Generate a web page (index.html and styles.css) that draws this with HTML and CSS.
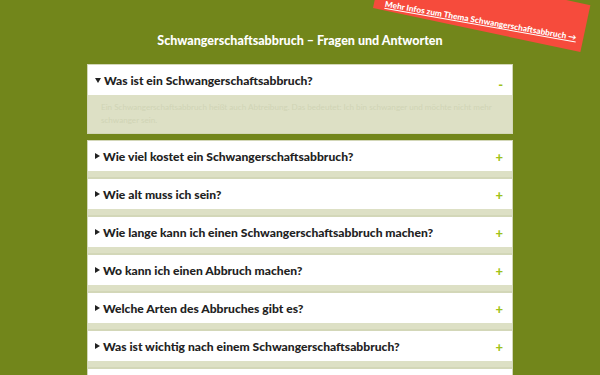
FILE: index.html
```html
<!DOCTYPE html>
<html lang="de">
<head>
  <meta charset="utf-8" />
  <title>Schwangerschaftsabbruch – Fragen und Antworten</title>
  <link rel="stylesheet" href="styles.css">
</head>
<body>

<a class="ribbon" href="#"><span>Mehr Infos zum Thema Schwangerschaftsabbruch →</span></a>

<h1>Schwangerschaftsabbruch – Fragen und Antworten</h1>

<div class="faq">
  <details open>
    <summary>Was ist ein Schwangerschaftsabbruch?</summary>
    <p>Ein Schwangerschaftsabbruch heißt auch Abtreibung. Das bedeutet: Ich bin schwanger und möchte nicht mehr schwanger sein.</p>
  </details>
  <details>
    <summary>Wie viel kostet ein Schwangerschaftsabbruch?</summary>
    <p>Die Kosten hängen von der Methode ab.</p>
  </details>
  <details>
    <summary>Wie alt muss ich sein?</summary>
    <p>Auch Jugendliche können einen Abbruch machen.</p>
  </details>
  <details>
    <summary>Wie lange kann ich einen Schwangerschaftsabbruch machen?</summary>
    <p>Bis zur 12. Woche nach der Befruchtung.</p>
  </details>
  <details>
    <summary>Wo kann ich einen Abbruch machen?</summary>
    <p>In einer Praxis oder in einem Krankenhaus.</p>
  </details>
  <details>
    <summary>Welche Arten des Abbruches gibt es?</summary>
    <p>Es gibt den Abbruch mit Medikamenten und den operativen Abbruch.</p>
  </details>
  <details>
    <summary>Was ist wichtig nach einem Schwangerschaftsabbruch?</summary>
    <p>Ruhe dich aus und achte auf deinen Körper.</p>
  </details>
  <details>
    <summary>Wo bekomme ich Beratung?</summary>
    <p>Bei einer Beratungsstelle in deiner Nähe.</p>
  </details>
</div>

</body>
</html>
```

FILE: styles.css
```css
html { height: 100%; }
body {
  margin: 0;
  padding: 0 0 2em;
  background: #72861b;
  font-family: Lato, 'Noto Sans', Arial, sans-serif;
  color: #222;
  overflow: hidden;
}
h1 {
  margin: 0;
  padding: 31px 0 14px;
  text-align: center;
  font-size: 12.5px;
  line-height: 19px;
  font-weight: 900;
  color: #fff;
}
.ribbon {
  position: absolute;
  top: -40px;
  left: 373px;
  width: 212px;
  height: 48px;
  display: flex;
  align-items: flex-end;
  justify-content: center;
  background: #f64b3c;
  color: #fff;
  font-size: 8.3px;
  font-weight: 900;
  text-decoration: underline;
  transform: rotate(12deg);
  transform-origin: left bottom;
  white-space: nowrap;
}
.ribbon span {
  display: inline-block;
  padding: 0 0 5px 4px;
  transform: rotate(-2deg);
}
.faq {
  width: 426px;
  margin: 0 auto;
}
details {
  background: #dde0c5;
  border: 1px solid #d3d7b8;
  padding-bottom: 6px;
}
details[open] {
  padding-bottom: 0;
  margin-bottom: 6px;
}
summary {
  display: flex;
  align-items: center;
  height: 30px;
  padding: 0 9px 0 7px;
  background: #fff;
  font-size: 12.1px;
  font-weight: 900;
  list-style: none;
  cursor: pointer;
}
summary::-webkit-details-marker { display: none; }
summary::before {
  content: '';
  width: 0;
  height: 0;
  margin-right: 3px;
  border-style: solid;
  border-width: 3px 0 3px 5px;
  border-color: transparent transparent transparent #222;
}
details[open] summary::before {
  border-width: 5px 3px 0 3px;
  border-color: #222 transparent transparent transparent;
}
summary::after {
  content: '+';
  margin-left: auto;
  color: #9fc21a;
  font-size: 13px;
  font-weight: 900;
  padding-top: 2px;
}
details[open] summary::after {
  content: '-';
  padding-top: 8px;
}
details p {
  margin: 0;
  padding: 6px 6px 6px 13px;
  font-size: 8.1px;
  line-height: 13px;
  color: #d0d4b5;
}
```
